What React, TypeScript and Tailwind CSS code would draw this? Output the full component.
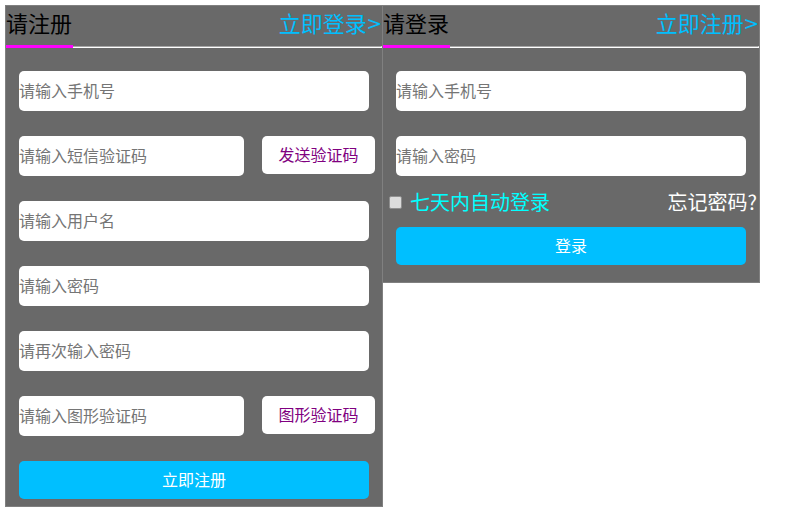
import React from "react";

const font = { fontFamily: '"Noto Sans CJK SC", "Noto Sans", sans-serif' };

function TabHead({ title, link }: { title: string; link: string }) {
  return (
    <div>
      <div className="flex items-start justify-between h-[39px] pt-[2px] text-[22px] leading-[28px]">
        <span className="text-black">{title}</span>
        <a href="#" className="text-[#00bfff] pr-[2px]">
          {link}
          <span className="ml-[1px] inline-block scale-x-110">&gt;</span>
        </a>
      </div>
      <div className="flex items-end h-[3px]">
        <div className="w-[67px] h-[3px] bg-[#ff00ff]" />
        <div className="flex-1 h-[2px] border-t border-t-[#a6a6a6] border-b border-b-white border-r border-r-white" />
      </div>
    </div>
  );
}

function Field({ placeholder, w = "w-[350px]" }: { placeholder: string; w?: string }) {
  return (
    <input
      type="text"
      placeholder={placeholder}
      className={`${w} h-[40px] rounded-[5px] bg-white px-0 pb-[3px] text-[16px] text-black placeholder:text-[#757575] outline-none`}
    />
  );
}

function CodeRow({ placeholder, btn }: { placeholder: string; btn: string }) {
  return (
    <div className="flex items-start">
      <Field placeholder={placeholder} w="w-[225px]" />
      <button className="ml-[18px] w-[113px] h-[38px] rounded-[5px] bg-white pb-[2px] text-[16px] text-[#800080]">
        {btn}
      </button>
    </div>
  );
}

export default function App() {
  return (
    <div className="min-h-[512px] bg-white pl-[5px] pt-[5px]" style={font}>
      <div className="flex items-start">
        {/* register */}
        <div className="w-[378px] border border-[#808080] bg-[#696969]">
          <TabHead title="请注册" link="立即登录" />
          <div className="flex flex-col gap-[25px] pl-[13px] pt-[23px] pb-[7px]">
            <Field placeholder="请输入手机号" />
            <CodeRow placeholder="请输入短信验证码" btn="发送验证码" />
            <Field placeholder="请输入用户名" />
            <Field placeholder="请输入密码" />
            <Field placeholder="请再次输入密码" />
            <CodeRow placeholder="请输入图形验证码" btn="图形验证码" />
            <button className="w-[350px] h-[38px] rounded-[5px] bg-[#00bfff] pb-[2px] text-[16px] text-white">
              立即注册
            </button>
          </div>
        </div>

        {/* login */}
        <div className="-ml-px w-[378px] border border-[#808080] bg-[#696969]">
          <TabHead title="请登录" link="立即注册" />
          <div className="flex flex-col pl-[13px] pt-[23px] gap-[25px]">
            <Field placeholder="请输入手机号" />
            <Field placeholder="请输入密码" />
          </div>
          <div className="flex items-center h-[28px] mt-[12px] text-[20px]">
            <input
              type="checkbox"
              className="m-0 ml-[6px] w-[13px] h-[13px] appearance-none rounded-[2px] border border-[#8f8f8f] bg-[#dcdcdc]"
            />
            <span className="ml-[8px] text-[#00ffff]">七天内自动登录</span>
            <span className="ml-auto pr-[2px] text-white">忘记密码?</span>
          </div>
          <div className="pl-[13px] pt-[11px] pb-[17px]">
            <button className="w-[350px] h-[38px] rounded-[5px] bg-[#00bfff] pb-[2px] text-[16px] text-white">
              登录
            </button>
          </div>
        </div>
      </div>
    </div>
  );
}
